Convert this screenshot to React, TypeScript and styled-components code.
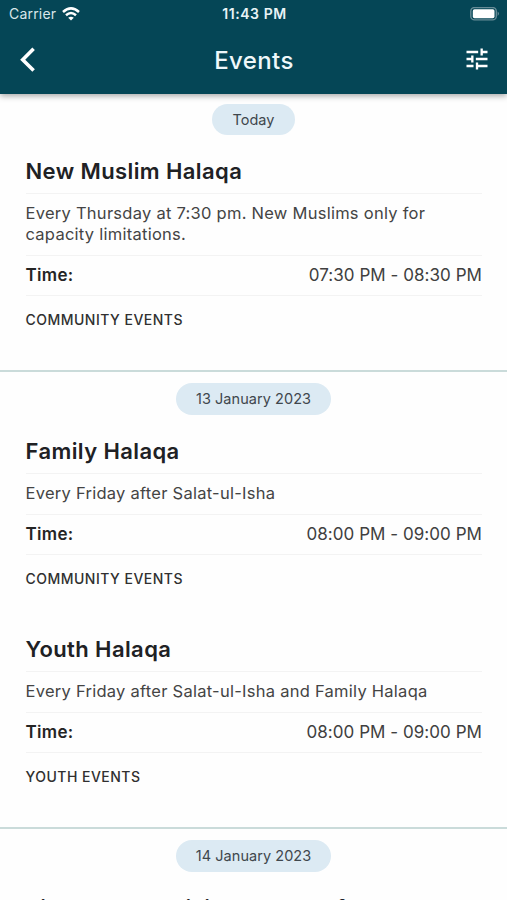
import React from "react";
import styled, { createGlobalStyle } from "styled-components";
import { MdTune } from "react-icons/md";

const GlobalStyle = createGlobalStyle`
  * { box-sizing: border-box; }
  body { margin: 0; background: #fff; overflow: hidden; }
  h1, h2, p { margin: 0; }
`;

const Screen = styled.div`
  width: 100%;
  height: 900px;
  display: flex;
  flex-direction: column;
  overflow: hidden;
  background: #fefefe;
  font-family: Inter, "Liberation Sans", sans-serif;
  color: #202124;
`;

const Header = styled.header`
  flex: none;
  height: 94px;
  background: #054656;
  color: #fff;
  box-shadow: 0 2px 6px rgba(0, 0, 0, 0.35);
  z-index: 1;
`;

const StatusBar = styled.div`
  height: 27px;
  padding: 0 7px 0 9px;
  display: grid;
  grid-template-columns: 1fr auto 1fr;
  align-items: center;
`;

const Carrier = styled.div`
  display: flex;
  align-items: center;
  gap: 6px;
  font-size: 14px;
  letter-spacing: 0.2px;
  color: #d9e6ea;
`;

const Clock = styled.div`
  font-size: 14px;
  font-weight: 600;
  letter-spacing: 0.55px;
  color: #e9f3f6;
`;

const BatteryIcon = styled.svg`
  justify-self: end;
`;

const TitleBar = styled.div`
  height: 66px;
  padding: 0 16px 0 20px;
  display: grid;
  grid-template-columns: 1fr auto 1fr;
  align-items: center;
`;

const PageTitle = styled.h1`
  padding: 1px 3px 0 0;
  font-size: 24px;
  line-height: 30px;
  font-weight: 500;
  letter-spacing: 0.4px;
  color: #eff8fa;
`;

const IconButton = styled.button<{ $end?: boolean }>`
  justify-self: ${(p) => (p.$end ? "end" : "start")};
  display: flex;
  padding: ${(p) => (p.$end ? "0 0 2px" : "0")};
  border: 0;
  background: none;
  color: #fff;
`;

const DateChip = styled.div`
  align-self: center;
  height: 32px;
  padding: 0 20px 1px;
  border-radius: 16px;
  display: flex;
  align-items: center;
  background: #dceaf3;
  color: #3f474d;
  font-size: 14.5px;
  letter-spacing: 0.05px;
`;

const Day = styled.section<{ $first?: boolean }>`
  padding-top: ${(p) => (p.$first ? "10px" : "11px")};
  border-top: ${(p) => (p.$first ? "0" : "2px solid #cadbda")};
  display: flex;
  flex-direction: column;
  flex: none;
  ${DateChip} { height: ${(p) => (p.$first ? "31px" : "32px")}; }
`;

const Event = styled.article`
  padding: 20px 25px 38px 25.5px;
  & + & { padding-top: 4px; }
`;

const EventTitle = styled.h2`
  height: 39px;
  font-size: 22px;
  line-height: 33px;
  font-weight: 600;
  letter-spacing: 0.4px;
  white-space: nowrap;
  border-bottom: 1px solid #f3f3f3;
`;

const Description = styled.p`
  padding: 9px 0 10px;
  font-size: 16.5px;
  line-height: 21px;
  letter-spacing: 0.26px;
  color: #444;
  border-bottom: 1px solid #f3f3f3;
`;

const TimeRow = styled.div`
  height: 40px;
  padding-bottom: 2px;
  display: flex;
  align-items: center;
  justify-content: space-between;
  font-size: 17px;
  color: #404040;
  border-bottom: 1px solid #f3f3f3;
`;

const TimeLabel = styled.span`
  font-weight: 600;
  letter-spacing: 0.3px;
  color: #242424;
`;

const TimeValue = styled.span`
  letter-spacing: 0.05px;
`;

const Category = styled.div`
  height: 36px;
  padding-top: 14px;
  font-size: 14px;
  line-height: 20px;
  font-weight: 500;
  letter-spacing: 0.48px;
  color: #303030;
`;

type EventItem = { title: string; description: string; time: string; category: string };
type DayItem = { date: string; events: EventItem[] };

const days: DayItem[] = [
  {
    date: "Today",
    events: [
      {
        title: "New Muslim Halaqa",
        description: "Every Thursday at 7:30 pm. New Muslims only for capacity limitations.",
        time: "07:30 PM - 08:30 PM",
        category: "COMMUNITY EVENTS",
      },
    ],
  },
  {
    date: "13 January 2023",
    events: [
      {
        title: "Family Halaqa",
        description: "Every Friday after Salat-ul-Isha",
        time: "08:00 PM - 09:00 PM",
        category: "COMMUNITY EVENTS",
      },
      {
        title: "Youth Halaqa",
        description: "Every Friday after Salat-ul-Isha and Family Halaqa",
        time: "08:00 PM - 09:00 PM",
        category: "YOUTH EVENTS",
      },
    ],
  },
  {
    date: "14 January 2023",
    events: [
      {
        title: "Sisters Book Visit Programs for",
        description: "Every second Saturday",
        time: "10:00 AM - 11:00 AM",
        category: "COMMUNITY EVENTS",
      },
    ],
  },
];

export default function App() {
  return (
    <Screen>
      <GlobalStyle />
      <Header>
        <StatusBar>
          <Carrier>
            Carrier
            <svg width="18" height="14" viewBox="0 0 18 14" fill="none" stroke="#fff" strokeWidth="2.5">
              <path d="M1 5Q9-2.2 17 5" />
              <path d="M4 8.3Q9 3.8 14 8.3" />
              <path d="M6.2 10.8Q9 8.6 11.8 10.8L9 13.5Z" fill="#fff" stroke="none" />
            </svg>
          </Carrier>
          <Clock>11:43 PM</Clock>
          <BatteryIcon width="30" height="14" viewBox="0 0 30 14">
            <rect x="0.8" y="0.5" width="25.5" height="12.4" rx="3.7" fill="none" stroke="#668b96" strokeWidth="1.4" />
            <rect x="2.8" y="2.2" width="21.7" height="9" rx="1.7" fill="#fff" />
            <path d="M27.6 4.5Q30.4 6.7 27.6 8.9Z" fill="#668b96" />
          </BatteryIcon>
        </StatusBar>
        <TitleBar>
          <IconButton aria-label="Back">
            <svg width="16" height="26" viewBox="0 0 16 26" fill="none" stroke="#fff" strokeWidth="3.6">
              <path d="M13.6 1.8L2.7 12.7L13.6 23.6" />
            </svg>
          </IconButton>
          <PageTitle>Events</PageTitle>
          <IconButton $end aria-label="Filter">
            <MdTune size={28} />
          </IconButton>
        </TitleBar>
      </Header>
      {days.map((day, index) => (
        <Day key={day.date} $first={index === 0}>
          <DateChip>{day.date}</DateChip>
          {day.events.map((event) => (
            <Event key={event.title}>
              <EventTitle>{event.title}</EventTitle>
              <Description>{event.description}</Description>
              <TimeRow>
                <TimeLabel>Time:</TimeLabel>
                <TimeValue>{event.time}</TimeValue>
              </TimeRow>
              <Category>{event.category}</Category>
            </Event>
          ))}
        </Day>
      ))}
    </Screen>
  );
}
